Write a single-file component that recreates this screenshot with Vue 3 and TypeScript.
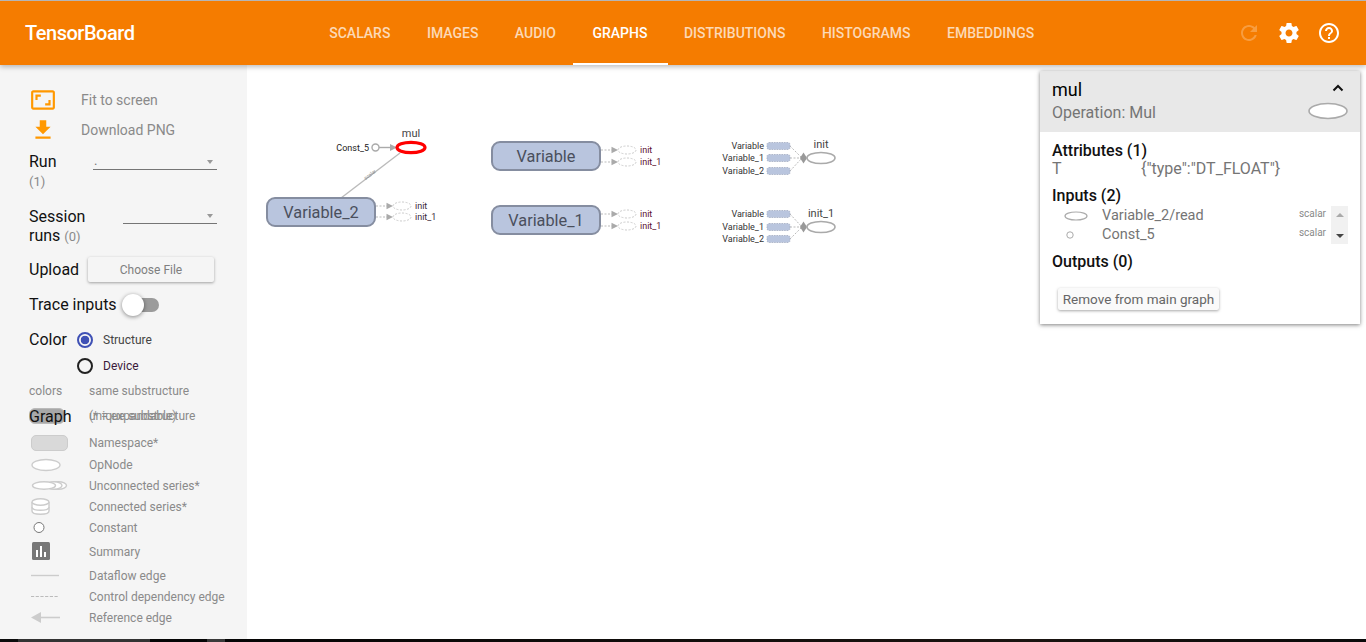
<script setup lang="ts">
interface Stub {
  x: number;
  y: number;
  label: string;
  tone: string;
}

interface SeriesNode {
  y: number;
  title: string;
  inputs: { y: number; label: string }[];
}

const tabs: string[] = ['Scalars', 'Images', 'Audio', 'Graphs', 'Distributions', 'Histograms', 'Embeddings'];

const mainNodes = [
  { x: 267, y: 198, label: 'Variable_2' },
  { x: 492, y: 142, label: 'Variable' },
  { x: 492, y: 206, label: 'Variable_1' }
];

const stubs: Stub[] = [
  { x: 376, y: 206, label: 'init', tone: '#3a2a3a' },
  { x: 376, y: 217, label: 'init_1', tone: '#3a2a3a' },
  { x: 601, y: 150, label: 'init', tone: '#5a1030' },
  { x: 601, y: 162, label: 'init_1', tone: '#5a1030' },
  { x: 601, y: 214, label: 'init', tone: '#5a1030' },
  { x: 601, y: 226, label: 'init_1', tone: '#5a1030' }
];

const seriesNodes: SeriesNode[] = [
  {
    y: 158,
    title: 'init',
    inputs: [
      { y: 146, label: 'Variable' },
      { y: 158, label: 'Variable_1' },
      { y: 171, label: 'Variable_2' }
    ]
  },
  {
    y: 227,
    title: 'init_1',
    inputs: [
      { y: 214, label: 'Variable' },
      { y: 227, label: 'Variable_1' },
      { y: 239, label: 'Variable_2' }
    ]
  }
];
</script>

<template>
  <div class="page">
    <header class="toolbar">
      <div class="brand">TensorBoard</div>
      <nav class="tabs">
        <div v-for="tab in tabs" :key="tab" class="tab" :class="{ active: tab === 'Graphs' }">{{ tab }}</div>
      </nav>
      <div class="tool-icons">
        <svg class="refresh" width="24" height="24" viewBox="0 0 24 24">
          <path d="M17.65 6.35C16.2 4.9 14.21 4 12 4c-4.42 0-7.99 3.58-7.99 8s3.57 8 7.99 8c3.73 0 6.84-2.55 7.73-6h-2.08c-.82 2.33-3.04 4-5.65 4-3.31 0-6-2.69-6-6s2.69-6 6-6c1.66 0 3.14.69 4.22 1.78L13 11h7V4l-2.35 2.35z" />
        </svg>
        <svg width="24" height="24" viewBox="0 0 24 24">
          <path d="M19.43 12.98c.04-.32.07-.64.07-.98s-.03-.66-.07-.98l2.11-1.65c.19-.15.24-.42.12-.64l-2-3.46c-.12-.22-.39-.3-.61-.22l-2.49 1c-.52-.4-1.08-.73-1.69-.98l-.38-2.65C14.46 2.18 14.25 2 14 2h-4c-.25 0-.46.18-.49.42l-.38 2.65c-.61.25-1.17.59-1.69.98l-2.49-1c-.23-.09-.49 0-.61.22l-2 3.46c-.13.22-.07.49.12.64l2.11 1.65c-.04.32-.07.65-.07.98s.03.66.07.98l-2.11 1.65c-.19.15-.24.42-.12.64l2 3.46c.12.22.39.3.61.22l2.49-1c.52.4 1.08.73 1.69.98l.38 2.65c.03.24.24.42.49.42h4c.25 0 .46-.18.49-.42l.38-2.65c.61-.25 1.17-.59 1.69-.98l2.49 1c.23.09.49 0 .61-.22l2-3.46c.12-.22.07-.49-.12-.64l-2.11-1.65zM12 15.5c-1.93 0-3.5-1.57-3.5-3.5s1.57-3.5 3.5-3.5 3.5 1.57 3.5 3.5-1.57 3.5-3.5 3.5z" />
        </svg>
        <svg width="24" height="24" viewBox="0 0 24 24">
          <path d="M11 18h2v-2h-2v2zm1-16C6.48 2 2 6.48 2 12s4.48 10 10 10 10-4.48 10-10S17.52 2 12 2zm0 18c-4.41 0-8-3.59-8-8s3.59-8 8-8 8 3.59 8 8-3.59 8-8 8zm0-14c-2.21 0-4 1.79-4 4h2c0-1.1.9-2 2-2s2 .9 2 2c0 2-3 1.75-3 5h2c0-2.25 3-2.5 3-5 0-2.21-1.79-4-4-4z" />
        </svg>
      </div>
    </header>

    <div class="body">
      <aside class="sidebar">
        <div class="action first">
          <svg class="action-icon" width="26" height="26" viewBox="0 0 24 24">
            <path d="M19 12h-2v3h-3v2h5v-5zM7 9h3V7H5v5h2V9zm14-6H3c-1.1 0-2 .9-2 2v14c0 1.1.9 2 2 2h18c1.1 0 2-.9 2-2V5c0-1.1-.9-2-2-2zm0 16.01H3V4.99h18v14.02z" />
          </svg>
          <span>Fit to screen</span>
        </div>
        <div class="action">
          <svg class="action-icon" width="26" height="26" viewBox="0 0 24 24">
            <path d="M19 9h-4V3H9v6H5l7 7 7-7zM5 18v2h14v-2H5z" />
          </svg>
          <span>Download PNG</span>
        </div>

        <div class="control run-row">
          <div class="label">Run<div class="count">(1)</div></div>
          <div class="select run-select"><span class="value">.</span><i class="caret"></i></div>
        </div>

        <div class="control session-row">
          <div class="label session-label">Session<br />runs <span class="count inline">(0)</span></div>
          <div class="select session-select"><i class="caret"></i></div>
        </div>

        <div class="control upload-row">
          <div class="label">Upload</div>
          <div class="file-button">Choose File</div>
        </div>

        <div class="control trace-row">
          <div class="label">Trace inputs</div>
          <div class="toggle"><i class="knob"></i></div>
        </div>

        <div class="control color-row">
          <div class="label color-label">Color</div>
          <div class="radios">
            <div class="radio-row"><i class="radio on"></i><span>Structure</span></div>
            <div class="radio-row"><i class="radio"></i><span class="device">Device</span></div>
          </div>
        </div>

        <div class="legend">
          <div class="legend-row colors-row">
            <div class="legend-key">colors</div>
            <div>same substructure</div>
          </div>
          <div class="legend-row unique-row">
            <div class="legend-key"><i class="unique-swatch"></i></div>
            <div>unique substructure</div>
            <div class="graph-title">Graph</div>
            <div class="expandable">(* = expandable)</div>
          </div>
          <div class="legend-row namespace-row">
            <div class="legend-key"><i class="namespace-swatch"></i></div>
            <div>Namespace*</div>
          </div>
          <div class="legend-row h21">
            <svg class="legend-key" width="60" height="21" viewBox="0 0 60 21">
              <ellipse cx="17" cy="11" rx="14" ry="5.5" class="sym" />
            </svg>
            <div>OpNode</div>
          </div>
          <div class="legend-row h21">
            <svg class="legend-key" width="60" height="21" viewBox="0 0 60 21">
              <ellipse cx="29.5" cy="10.5" rx="8" ry="3.8" class="sym" />
              <ellipse cx="25" cy="10.5" rx="8" ry="3.8" class="sym" />
              <ellipse cx="15" cy="10.5" rx="11.5" ry="3.8" class="sym" />
            </svg>
            <div>Unconnected series*</div>
          </div>
          <div class="legend-row h21">
            <svg class="legend-key" width="60" height="21" viewBox="0 0 60 21">
              <path d="M3 6v9c0 2 4 3.2 8.5 3.2S20 17 20 15V6" class="sym" />
              <path d="M3 11c0 2 4 3.2 8.5 3.2S20 13 20 11" class="sym" />
              <ellipse cx="11.5" cy="6" rx="8.5" ry="3.2" class="sym" />
            </svg>
            <div>Connected series*</div>
          </div>
          <div class="legend-row h21">
            <svg class="legend-key" width="60" height="21" viewBox="0 0 60 21">
              <circle cx="10" cy="10.5" r="5" fill="#fff" stroke="#777" />
            </svg>
            <div>Constant</div>
          </div>
          <div class="legend-row h27">
            <svg class="legend-key" width="60" height="27" viewBox="0 0 60 27">
              <rect x="3" y="4" width="18" height="18" rx="1.5" fill="#777" />
              <rect x="7" y="12" width="2" height="7" fill="#fff" />
              <rect x="11" y="8" width="2" height="11" fill="#fff" />
              <rect x="15" y="14" width="2" height="5" fill="#fff" />
            </svg>
            <div>Summary</div>
          </div>
          <div class="legend-row h21">
            <svg class="legend-key" width="60" height="21" viewBox="0 0 60 21">
              <line x1="2" y1="10.5" x2="30" y2="10.5" stroke="#ccc" stroke-width="1.4" />
            </svg>
            <div>Dataflow edge</div>
          </div>
          <div class="legend-row h21">
            <svg class="legend-key" width="60" height="21" viewBox="0 0 60 21">
              <line x1="2" y1="10.5" x2="30" y2="10.5" stroke="#bbb" stroke-width="1" stroke-dasharray="3.2 1.5" />
            </svg>
            <div>Control dependency edge</div>
          </div>
          <div class="legend-row h21">
            <svg class="legend-key" width="60" height="21" viewBox="0 0 60 21">
              <line x1="10" y1="10.5" x2="31" y2="10.5" stroke="#ccc" stroke-width="1.6" />
              <path d="M2 10.5L12 5v11z" fill="#ccc" />
            </svg>
            <div>Reference edge</div>
          </div>
        </div>
      </aside>

      <main class="canvas">
        <svg class="graph" width="1119" height="574" viewBox="247 65 1119 574">
          <!-- mul and its inputs -->
          <line x1="400" y1="153" x2="341" y2="198" stroke="#bbb" stroke-width="1.4" />
          <text x="371" y="176" class="edge-label" transform="rotate(-37 371 176)">scalar</text>
          <text x="369" y="151" class="tiny end dark">Const_5</text>
          <circle cx="375.5" cy="147.5" r="3.5" fill="#fff" stroke="#aaa" stroke-width="1.4" />
          <line x1="379" y1="147.5" x2="392" y2="147.5" stroke="#aaa" stroke-width="1.4" />
          <path d="M397 147.5l-7-3.4v6.8z" fill="#aaa" />
          <ellipse cx="411" cy="147.5" rx="14" ry="5.2" fill="#fff" stroke="#f00" stroke-width="3.2" />
          <text x="411" y="137" class="op-title middle">mul</text>

          <g v-for="node in mainNodes" :key="node.label">
            <rect :x="node.x" :y="node.y" width="108" height="28" rx="8" class="meta" />
            <text :x="node.x + 54" :y="node.y + 19.6" class="meta-label middle">{{ node.label }}</text>
          </g>

          <g v-for="stub in stubs" :key="`${stub.x}-${stub.y}`">
            <line :x1="stub.x" :y1="stub.y" :x2="stub.x + 11" :y2="stub.y" class="dots" />
            <path :d="`M${stub.x + 17} ${stub.y}l-6.5-3.2v6.4z`" fill="#aaa" />
            <ellipse :cx="stub.x + 26" :cy="stub.y" rx="9" ry="4" class="ghost" />
            <text :x="stub.x + 39" :y="stub.y + 3" class="tiny" :fill="stub.tone">{{ stub.label }}</text>
          </g>

          <g v-for="series in seriesNodes" :key="series.title">
            <g v-for="input in series.inputs" :key="input.y">
              <line x1="790" :y1="input.y" x2="802" :y2="series.y" class="dots" />
              <text x="764" :y="input.y + 3" class="small-end">{{ input.label }}</text>
              <rect x="767" :y="input.y - 3.5" width="23" height="7" rx="2" class="series-box" />
            </g>
            <path :d="`M803.5 ${series.y - 5.5}l3.5 5.5-3.5 5.5-3.5-5.5z`" fill="#999" />
            <ellipse cx="821" :cy="series.y" rx="14" ry="5.5" fill="#fff" stroke="#aaa" stroke-width="1.6" />
            <text x="821" :y="series.y - 10" class="series-title middle">{{ series.title }}</text>
          </g>
        </svg>

        <section class="info-card">
          <div class="info-head">
            <div class="info-head-text">
              <div class="info-name">mul</div>
              <div class="info-op">Operation: Mul</div>
            </div>
            <div class="info-head-icons">
              <svg width="14" height="14" viewBox="0 0 14 14">
                <path d="M2.5 9.5L7 5l4.5 4.5" fill="none" stroke="#111" stroke-width="2" />
              </svg>
              <svg width="42" height="20" viewBox="0 0 42 20">
                <ellipse cx="22" cy="10" rx="19" ry="7.5" fill="#fff" stroke="#aaa" stroke-width="1.6" />
              </svg>
            </div>
          </div>
          <div class="info-body">
            <div class="info-section">Attributes (1)</div>
            <div class="attr-row"><span class="attr-key">T</span><span>{"type":"DT_FLOAT"}</span></div>
            <div class="info-section inputs">Inputs (2)</div>
            <div class="input-list">
              <div class="input-rows">
                <div class="input-row">
                  <svg class="input-icon" width="50" height="12" viewBox="0 0 50 12">
                    <ellipse cx="24" cy="6" rx="11" ry="4" fill="#fff" stroke="#aaa" stroke-width="1.2" />
                  </svg>
                  <span class="input-name">Variable_2/read</span>
                  <span class="input-type">scalar</span>
                </div>
                <div class="input-row">
                  <svg class="input-icon" width="50" height="12" viewBox="0 0 50 12">
                    <circle cx="18" cy="6" r="3.2" fill="#fff" stroke="#aaa" />
                  </svg>
                  <span class="input-name">Const_5</span>
                  <span class="input-type">scalar</span>
                </div>
              </div>
              <div class="scrollbar"><i class="arrow up"></i><i class="arrow down"></i></div>
            </div>
            <div class="info-section outputs">Outputs (0)</div>
            <div class="remove-button">Remove from main graph</div>
          </div>
        </section>
      </main>
    </div>

    <footer class="taskbar">
      <i class="seg s1"></i><i class="seg s2"></i><i class="seg s3"></i><i class="seg s4"></i><i class="seg s5"></i>
    </footer>
  </div>
</template>

<style>
html,
body {
  margin: 0;
  background: #fff;
  overflow: hidden;
}
</style>

<style scoped>
.page {
  width: 1366px;
  height: 642px;
  display: flex;
  flex-direction: column;
  overflow: hidden;
  font-family: Roboto, "Noto Sans", sans-serif;
}

.toolbar {
  position: relative;
  z-index: 2;
  flex: none;
  height: 64px;
  display: flex;
  align-items: center;
  background: #f57c00;
  border-top: 1px solid #b5b5b5;
  box-shadow: 0 2px 5px rgba(0, 0, 0, 0.26);
}

.brand {
  width: 311px;
  padding-left: 25px;
  box-sizing: border-box;
  color: #fff;
  font-size: 20px;
  font-weight: 500;
  letter-spacing: -0.48px;
}

.tabs {
  display: flex;
  height: 100%;
}

.tab {
  position: relative;
  display: flex;
  align-items: center;
  padding: 0 18.25px;
  color: rgba(255, 255, 255, 0.72);
  font-size: 14px;
  font-weight: 500;
  text-transform: uppercase;
}

.tab.active {
  color: #fff;
}

.tab.active::after {
  content: "";
  position: absolute;
  left: -1px;
  right: -2px;
  bottom: 0;
  height: 2px;
  background: #fff;
}

.tool-icons {
  margin-left: auto;
  display: flex;
  gap: 16px;
  padding-right: 25px;
}

.tool-icons svg {
  fill: #fff;
}

.tool-icons .refresh {
  opacity: 0.25;
}

.body {
  flex: 1;
  min-height: 0;
  display: flex;
}

.sidebar {
  flex: none;
  width: 247px;
  box-sizing: border-box;
  padding-left: 29px;
  background: #f5f5f5;
  color: #111;
  font-size: 16px;
}

.action {
  display: flex;
  align-items: center;
  height: 30px;
  color: #8a8a8a;
  font-size: 14px;
}

.action.first {
  margin-top: 20px;
}

.action-icon {
  flex: none;
  fill: #ff9800;
  margin-right: 25px;
  margin-left: 1px;
}

.control {
  display: flex;
}

.count {
  color: #8a8a8a;
  font-size: 13px;
  margin-top: 2px;
}

.count.inline {
  margin: 0;
  font-size: 13px;
}

.run-row {
  margin-top: 8px;
  height: 54px;
}

.run-row .label {
  width: 64px;
  line-height: 18px;
}

.select {
  position: relative;
  height: 15px;
  margin-top: 1px;
  border-bottom: 1px solid #757575;
  color: #777;
  font-size: 13px;
  line-height: 13px;
}

.run-select {
  width: 124px;
}

.session-select {
  width: 94px;
  margin-top: 1px;
}

.value {
  padding-left: 1px;
}

.caret {
  position: absolute;
  right: 4px;
  top: 6px;
  border-left: 3.5px solid transparent;
  border-right: 3.5px solid transparent;
  border-top: 4px solid #999;
}

.session-row {
  height: 44px;
  margin-top: 0;
}

.session-label {
  width: 94px;
  line-height: 19px;
}

.upload-row {
  margin-top: 6px;
  height: 39px;
  align-items: flex-start;
}

.upload-row .label {
  width: 59px;
  line-height: 26px;
}

.file-button {
  width: 126px;
  height: 25px;
  line-height: 27px;
  text-align: center;
  background: #f5f5f5;
  border-radius: 2px;
  box-shadow: 0 1px 3px rgba(0, 0, 0, 0.35);
  color: #7f7f7f;
  font-size: 12px;
}

.trace-row {
  height: 34px;
  align-items: flex-start;
}

.trace-row .label {
  line-height: 18px;
  margin-top: 0;
}

.toggle {
  position: relative;
  width: 25px;
  height: 14px;
  margin: 2px 0 0 17px;
  border-radius: 7px;
  background: #9b9b9b;
}

.knob {
  position: absolute;
  left: -12px;
  top: -4px;
  width: 22px;
  height: 22px;
  border-radius: 50%;
  background: #fff;
  box-shadow: 0 1px 4px rgba(0, 0, 0, 0.45);
}

.color-row {
  height: 41px;
  margin-top: 0;
}

.color-label {
  width: 48px;
  line-height: 20px;
  margin-top: 0;
}

.radios {
  display: flex;
  flex-direction: column;
  gap: 8px;
}

.radio-row {
  display: flex;
  align-items: center;
  height: 16px;
  gap: 10px;
  margin-top: 2px;
  color: #444;
  font-size: 12px;
}

.device {
  color: #3b1a3a;
}

.radio {
  width: 12px;
  height: 12px;
  border: 2px solid #222;
  border-radius: 50%;
}

.radio.on {
  border-color: #3f51b5;
  background: radial-gradient(circle, #3f51b5 0 4px, transparent 4.6px);
}

.legend {
  margin-top: 8px;
  color: #8a8a8a;
  font-size: 12px;
}

.legend-row {
  position: relative;
  display: flex;
  align-items: center;
}

.legend-key {
  flex: none;
  width: 60px;
}

.colors-row {
  height: 24px;
}

.unique-row {
  height: 26px;
}

.namespace-row {
  height: 23px;
  margin-top: 2px;
}

.h21 {
  height: 21px;
}

.h27 {
  height: 27px;
}

.unique-swatch {
  display: block;
  width: 36px;
  height: 16px;
  border-radius: 6px;
  background: #a8a8a8;
  border: 1px solid #bbb;
  box-sizing: border-box;
}

.namespace-swatch {
  display: block;
  width: 37px;
  height: 16px;
  margin-left: 2px;
  border-radius: 5px;
  background: #d9d9d9;
  border: 1px solid #ccc;
  box-sizing: border-box;
}

.graph-title {
  position: absolute;
  left: 0;
  top: 4px;
  color: #111;
  font-size: 16px;
}

.expandable {
  position: absolute;
  left: 60px;
  top: 6px;
}

.sym {
  fill: #fff;
  stroke: #ccc;
  stroke-width: 1.4;
}

.canvas {
  position: relative;
  flex: 1;
  min-width: 0;
  background: #fff;
}

.graph {
  display: block;
}

.graph text {
  font-family: Roboto, "Noto Sans", sans-serif;
}

.middle {
  text-anchor: middle;
}

.end {
  text-anchor: end;
}

.tiny {
  font-size: 9px;
}

.dark {
  fill: #222;
}

.small-end {
  font-size: 9px;
  text-anchor: end;
  fill: #333;
}

.edge-label {
  font-size: 5px;
  fill: #888;
  text-anchor: middle;
}

.op-title {
  font-size: 11px;
  fill: #444;
}

.series-title {
  font-size: 11px;
  fill: #444;
}

.meta {
  fill: #b9c5de;
  stroke: #858da0;
  stroke-width: 2;
}

.meta-label {
  font-size: 16.3px;
  fill: #4a4f5c;
}

.dots {
  stroke: #bbb;
  stroke-width: 1;
  stroke-dasharray: 2 1.5;
}

.ghost {
  fill: #fff;
  stroke: #ccc;
  stroke-width: 1;
  stroke-dasharray: 2 1.5;
}

.series-box {
  fill: #b9c5de;
  stroke: #a4adc2;
  stroke-width: 0.8;
  stroke-dasharray: 1.5 1;
}

.info-card {
  position: absolute;
  top: 6px;
  right: 6px;
  width: 320px;
  height: 253px;
  background: #fff;
  box-shadow: 0 1px 4px rgba(0, 0, 0, 0.5);
}

.info-head {
  display: flex;
  justify-content: space-between;
  height: 61px;
  padding: 8px 12px 0;
  box-sizing: border-box;
  background: #e8e8e8;
}

.info-name {
  color: #000;
  font-size: 18px;
  line-height: 22px;
}

.info-op {
  margin-top: 2px;
  color: #757575;
  font-size: 16px;
  line-height: 20px;
}

.info-head-icons {
  display: flex;
  flex-direction: column;
  align-items: flex-end;
}

.info-head-icons svg:first-child {
  margin: 2px 3px 0 0;
}

.info-head-icons svg:last-child {
  margin-top: 6px;
}

.info-body {
  padding: 9px 12px 0;
  color: #757575;
  font-size: 14.5px;
}

.info-section {
  color: #111;
  font-size: 16px;
  font-weight: 500;
  line-height: 20px;
}

.attr-row {
  display: flex;
  margin-top: -1px;
  line-height: 18px;
  font-size: 16px;
}

.attr-key {
  width: 89px;
}

.inputs {
  margin-top: 8px;
}

.input-list {
  display: flex;
  justify-content: space-between;
  height: 38px;
  margin-right: 0;
}

.input-rows {
  flex: 1;
}

.input-row {
  position: relative;
  display: flex;
  align-items: center;
  height: 19px;
}

.input-icon {
  flex: none;
}

.input-type {
  margin-left: auto;
  margin-right: 5px;
  margin-bottom: 4px;
  color: #8a8a8a;
  font-size: 10px;
}

.scrollbar {
  flex: none;
  width: 17px;
  background: #f1f1f1;
  display: flex;
  flex-direction: column;
  align-items: center;
  justify-content: space-between;
  padding: 7px 0 6px;
  box-sizing: border-box;
}

.arrow {
  border-left: 4px solid transparent;
  border-right: 4px solid transparent;
}

.arrow.up {
  border-bottom: 4px solid #aaa;
}

.arrow.down {
  border-top: 4px solid #444;
}

.outputs {
  margin-top: 8px;
}

.remove-button {
  width: 161px;
  height: 22px;
  margin: 16px 0 0 6px;
  line-height: 22px;
  text-align: center;
  background: #fafafa;
  border-radius: 2px;
  box-shadow: 0 1px 3px rgba(0, 0, 0, 0.35);
  color: #666;
  font-size: 13.5px;
}

.taskbar {
  flex: none;
  display: flex;
  height: 3px;
  background: #050505;
}

.seg {
  display: block;
}

.s1 {
  width: 18px;
  background: #0c0c0c;
}

.s2 {
  width: 132px;
  background: #333;
}

.s3 {
  width: 57px;
  background: #050505;
}

.s4 {
  width: 18px;
  background: #3a3a3a;
}

.s5 {
  flex: 1;
  background: linear-gradient(90deg, #050505, #1a1410 70%, #0a0a0a);
}
</style>
